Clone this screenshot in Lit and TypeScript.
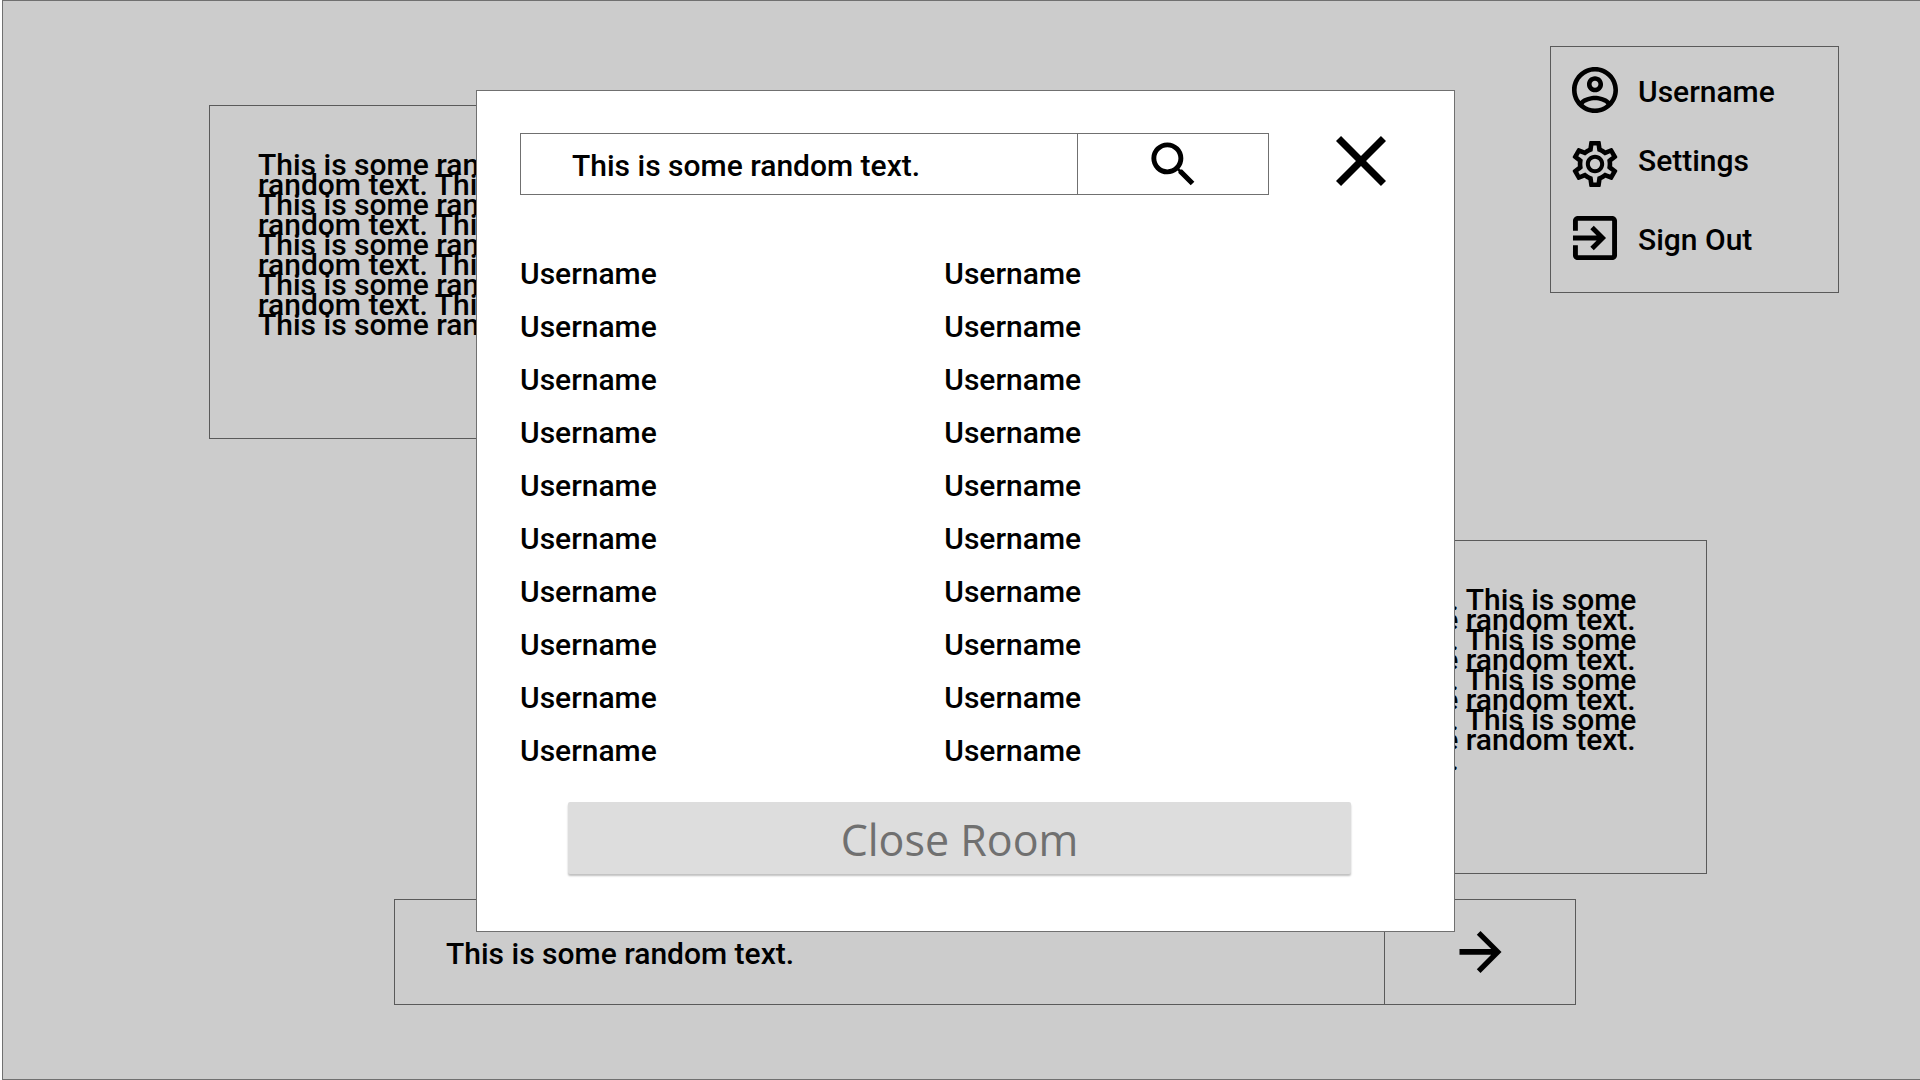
import { LitElement, html, css, svg } from "lit";
import { customElement } from "lit/decorators.js";

const SENTENCE = "This is some random text.";
const MESSAGE = Array(22).fill(SENTENCE).join(" ");
const MEMBERS: string[] = Array(20).fill("Username");

const ACCOUNT = svg`<path d="M12 2C6.48 2 2 6.48 2 12s4.48 10 10 10 10-4.48 10-10S17.52 2 12 2zM7.07 18.28c.43-.9 3.05-1.78 4.93-1.78s4.51.88 4.93 1.78C15.57 19.36 13.86 20 12 20s-3.57-.64-4.93-1.72zm11.29-1.45c-1.43-1.74-4.9-2.33-6.36-2.33s-4.93.59-6.36 2.33C4.62 15.49 4 13.82 4 12c0-4.41 3.59-8 8-8s8 3.59 8 8c0 1.82-.62 3.49-1.64 4.83zM12 6c-1.94 0-3.5 1.56-3.5 3.5S10.06 13 12 13s3.5-1.56 3.5-3.5S13.94 6 12 6zm0 5c-.83 0-1.5-.67-1.5-1.5S11.17 8 12 8s1.5.67 1.5 1.5S12.83 11 12 11z"/>`;
const GEAR = svg`<path d="M19.43 12.98c.04-.32.07-.64.07-.98 0-.34-.03-.66-.07-.98l2.11-1.65c.19-.15.24-.42.12-.64l-2-3.46c-.09-.16-.26-.25-.44-.25-.06 0-.12.01-.17.03l-2.49 1c-.52-.4-1.08-.73-1.69-.98l-.38-2.65C14.46 2.18 14.25 2 14 2h-4c-.25 0-.46.18-.49.42l-.38 2.65c-.61.25-1.17.59-1.69.98l-2.49-1c-.06-.02-.12-.03-.18-.03-.17 0-.34.09-.43.25l-2 3.46c-.13.22-.07.49.12.64l2.11 1.65c-.04.32-.07.65-.07.98 0 .33.03.66.07.98l-2.11 1.65c-.19.15-.24.42-.12.64l2 3.46c.09.16.26.25.44.25.06 0 .12-.01.17-.03l2.49-1c.52.4 1.08.73 1.69.98l.38 2.65c.03.24.24.42.49.42h4c.25 0 .46-.18.49-.42l.38-2.65c.61-.25 1.17-.59 1.69-.98l2.49 1c.06.02.12.03.18.03.17 0 .34-.09.43-.25l2-3.46c.12-.22.07-.49-.12-.64l-2.11-1.65zm-1.98-1.71c.04.31.05.52.05.73 0 .21-.02.43-.05.73l-.14 1.13.89.7 1.08.84-.7 1.21-1.27-.51-1.04-.42-.9.68c-.43.32-.84.56-1.25.73l-1.06.43-.16 1.13-.2 1.35h-1.4l-.19-1.35-.16-1.13-1.06-.43c-.43-.18-.83-.41-1.23-.71l-.91-.7-1.06.43-1.27.51-.7-1.21 1.08-.84.89-.7-.14-1.13c-.03-.31-.05-.54-.05-.74s.02-.43.05-.73l.14-1.13-.89-.7-1.08-.84.7-1.21 1.27.51 1.04.42.9-.68c.43-.32.84-.56 1.25-.73l1.06-.43.16-1.13.2-1.35h1.39l.19 1.35.16 1.13 1.06.43c.43.18.83.41 1.23.71l.91.7 1.06-.43 1.27-.51.7 1.21-1.07.85-.89.7.14 1.13zM12 8c-2.21 0-4 1.79-4 4s1.79 4 4 4 4-1.79 4-4-1.79-4-4-4zm0 6.25a2.25 2.25 0 1 1 0-4.5 2.25 2.25 0 0 1 0 4.5z"/>`;
const EXIT = svg`<path d="M10.09 15.59L11.5 17l5-5-5-5-1.41 1.41L12.67 11H3v2h9.67l-2.58 2.59zM19 3H5c-1.11 0-2 .9-2 2v4h2V5h14v14H5v-4H3v4c0 1.1.89 2 2 2h14c1.1 0 2-.9 2-2V5c0-1.1-.9-2-2-2z"/>`;

@customElement("app-root")
export class AppRoot extends LitElement {
  static styles = css`
    :host {
      display: block;
      font: 500 30px/36px Roboto, "Liberation Sans", sans-serif;
      color: #000;
    }
    *, *::before, *::after { box-sizing: border-box; }
    button, input {
      font: inherit;
      color: inherit;
      background: none;
      border: 0;
      border-radius: 0;
      margin: 0;
      padding: 0;
    }
    button { cursor: pointer; }
    svg { display: block; fill: currentColor; flex: none; }

    .room {
      position: relative;
      display: flex;
      flex-direction: column;
      min-height: 100vh;
      margin-left: 2px;
      padding-top: 45px;
      border: 1px solid #707070;
      border-right: 0;
      background: #ccc;
      --line: #5a5a5a;
    }
    .top {
      display: flex;
      justify-content: space-between;
      align-items: flex-start;
      padding: 0 81px 0 206px;
    }
    .message {
      flex: 0 1 1000px;
      min-height: 334px;
      margin: 0;
      padding: 49px 48px;
      border: 1px solid var(--line);
      line-height: 20px;
    }
    .top .message { margin-top: 59px; }
    .reply {
      display: flex;
      justify-content: flex-end;
      padding: 101px 213px 25px 0;
    }

    .menu {
      width: 289px;
      padding: 6px 20px 17px 21px;
      border: 1px solid var(--line);
    }
    .menu-item {
      display: flex;
      align-items: center;
      gap: 20px;
      width: 100%;
      height: 74px;
      text-align: left;
    }
    .menu-label { padding-top: 3px; }
    .menu-label.raised { padding: 0 0 6px; }

    .field {
      display: flex;
      border: 1px solid var(--line);
    }
    .field-input {
      flex: 1;
      min-width: 0;
      padding: 4px 51px 0;
      outline: 0;
    }
    .field-button {
      display: flex;
      align-items: center;
      justify-content: center;
      width: 191px;
      border-left: 1px solid var(--line);
    }
    .composer {
      height: 106px;
      margin: 0 344px 0 391px;
    }

    .dialog {
      position: absolute;
      top: 89px;
      left: 473px;
      right: 465px;
      --line: #707070;
      padding: 42px 43px 57px;
      border: 1px solid var(--line);
      background: #fff;
    }
    .dialog-head {
      display: flex;
      align-items: flex-start;
      gap: 67px;
      padding-right: 25px;
    }
    .search { flex: 1; height: 62px; }
    .close {
      display: flex;
      align-items: center;
      height: 56px;
    }
    .members {
      display: grid;
      grid-template-columns: 10fr 11fr;
      margin: 52px 0 25px;
      padding: 0;
      list-style: none;
      line-height: 53px;
    }
    .close-room-row { padding: 0 60px 0 48px; }
    .close-room {
      display: block;
      width: 100%;
      height: 72px;
      padding-top: 4px;
      border-radius: 2px;
      background: #ddd;
      box-shadow: 0 2px 2px rgba(0, 0, 0, 0.25);
      color: #707070;
      font: 400 43px/68px "Open Sans", "Noto Sans", sans-serif;
    }
  `;

  private menuItem(icon: unknown, viewBox: string, label: string, raised = false) {
    return html`<button class="menu-item" type="button">
      <svg width="46" height="46" viewBox=${viewBox} aria-hidden="true">${icon}</svg>
      <span class="menu-label ${raised ? "raised" : ""}">${label}</span>
    </button>`;
  }

  render() {
    return html`
      <main class="room">
        <div class="top">
          <p class="message">${MESSAGE}</p>
          <nav class="menu">
            ${this.menuItem(ACCOUNT, "2 2 20 20", "Username")}
            ${this.menuItem(GEAR, "2 2 20 20", "Settings", true)}
            ${this.menuItem(EXIT, "2.6 2.6 18.8 18.8", "Sign Out")}
          </nav>
        </div>
        <div class="reply"><p class="message">${MESSAGE}</p></div>
        <form class="field composer" @submit=${(e: Event) => e.preventDefault()}>
          <input class="field-input" type="text" aria-label="Message" .value=${SENTENCE} />
          <button class="field-button" type="submit" aria-label="Send">
            <svg width="63" height="63" viewBox="0 0.2 24 24"><path d="M12 4l-1.41 1.41L16.07 10.9H4v2.2h12.07l-5.48 5.49L12 20l8-8z"/></svg>
          </button>
        </form>

        <section class="dialog" role="dialog" aria-label="Room members">
          <div class="dialog-head">
            <form class="field search" @submit=${(e: Event) => e.preventDefault()}>
              <input class="field-input" type="text" aria-label="Search" .value=${SENTENCE} />
              <button class="field-button" type="submit" aria-label="Search">
                <svg width="59" height="59" viewBox="0 0 24 24"><path d="M15.5 14h-.79l-.28-.27A6.471 6.471 0 0 0 16 9.5 6.5 6.5 0 1 0 9.5 16c1.61 0 3.09-.59 4.23-1.57l.27.28v.79l5 4.99L20.49 19l-4.99-5zm-6 0C7.01 14 5 11.99 5 9.5S7.01 5 9.5 5 14 7.01 14 9.5 11.99 14 9.5 14z"/></svg>
              </button>
            </form>
            <button class="close" type="button" aria-label="Close">
              <svg width="50" height="50" viewBox="5 5 14 14"><path d="M19 6.41L17.59 5 12 10.59 6.41 5 5 6.41 10.59 12 5 17.59 6.41 19 12 13.41 17.59 19 19 17.59 13.41 12z"/></svg>
            </button>
          </div>
          <ul class="members">
            ${MEMBERS.map((name) => html`<li>${name}</li>`)}
          </ul>
          <div class="close-room-row">
            <button class="close-room" type="button">Close Room</button>
          </div>
        </section>
      </main>
    `;
  }
}
